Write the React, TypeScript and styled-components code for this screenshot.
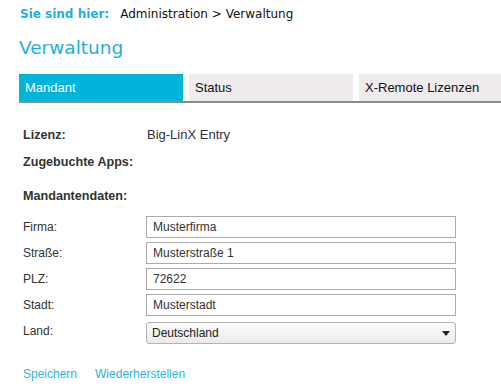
import React from 'react'
import styled, { createGlobalStyle } from 'styled-components'

const GlobalStyle = createGlobalStyle`
    html, body {
        margin: 0;
        padding: 0;
        background: #fff;
    }
    body {
        font-family: "Liberation Sans", Arial, sans-serif;
        color: #333;
    }
`

const Page = styled.div`
    width: 501px;
    height: 392px;
    overflow: hidden;
`

const Breadcrumb = styled.div`
    display: flex;
    align-items: baseline;
    padding: 6px 0 0 20px;
    height: 22px;
    font-family: "DejaVu Sans", Verdana, sans-serif;
    font-size: 12px;
    line-height: 16px;
    color: #111;
`
const Here = styled.strong`
    color: #1cb1dd;
    margin-right: 11px;
`

const Title = styled.h1`
    margin: 8px 0 0 19px;
    font-family: "DejaVu Sans", Verdana, sans-serif;
    font-weight: normal;
    font-size: 18.5px;
    line-height: 24px;
    color: #1cb1dd;
`

const Tabs = styled.div`
    display: flex;
    gap: 6px;
    margin: 14px 0 0 19px;
    border-bottom: 2px solid #8c8c8c;
`
const Tab = styled.div<{ $active?: boolean; $width: number }>`
    width: ${p => p.$width}px;
    height: 27px;
    box-sizing: border-box;
    padding: 0 6px;
    display: flex;
    align-items: center;
    font-size: 13px;
    background: ${p => (p.$active ? '#00b4dc' : '#efebee')};
    color: ${p => (p.$active ? '#fff' : '#111')};
`

const Info = styled.div`
    display: grid;
    grid-template-columns: 124px 1fr;
    row-gap: 9px;
    margin: 23px 0 0 23px;
    font-size: 13px;
    line-height: 18px;
`
const Key = styled.div`
    font-weight: bold;
    font-size: 12.6px;
`
const SectionTitle = styled.div`
    font-weight: bold;
    font-size: 12.6px;
    line-height: 18px;
    margin: 16px 0 0 23px;
`

const Form = styled.div`
    display: grid;
    grid-template-columns: 123px 310px;
    row-gap: 4px;
    margin: 11px 0 0 23px;
    font-size: 12px;
`
const Label = styled.label<{ $down?: number }>`
    display: flex;
    align-items: center;
    height: 22px;
    color: #333;
    margin-top: ${p => p.$down ?? 0}px;
`
const Input = styled.input`
    box-sizing: border-box;
    width: 310px;
    height: 22px;
    margin: 0;
    padding: 0 6px;
    border: 1px solid #ababab;
    font-family: "Liberation Sans", Arial, sans-serif;
    font-size: 12px;
    color: #333;
    background: #fff;
    outline: none;
`
const SelectWrap = styled.div`
    position: relative;
    width: 310px;
    height: 22px;
    margin-top: 2px;
    &::after {
        content: '';
        position: absolute;
        right: 6px;
        top: 9px;
        border-left: 4px solid transparent;
        border-right: 4px solid transparent;
        border-top: 5px solid #222;
    }
`
const Select = styled.select`
    appearance: none;
    box-sizing: border-box;
    width: 100%;
    height: 22px;
    margin: 0;
    padding: 0 5px;
    border: 1px solid #b3b3b3;
    border-radius: 3px;
    background: linear-gradient(#fdfbfc, #ebe9ea);
    font-family: "Liberation Sans", Arial, sans-serif;
    font-size: 12px;
    color: #222;
    outline: none;
`

const Actions = styled.div`
    display: flex;
    gap: 18px;
    margin: 23px 0 0 23px;
    font-size: 12px;
    line-height: 14px;
`
const Link = styled.a`
    color: #2bb6e1;
    text-decoration: none;
    cursor: pointer;
`

const fields = [
    { label: 'Firma:', value: 'Musterfirma' },
    { label: 'Straße:', value: 'Musterstraße 1' },
    { label: 'PLZ:', value: '72622' },
    { label: 'Stadt:', value: 'Musterstadt' },
]

const App: React.FC = () => {
    return (
        <Page>
            <GlobalStyle />
            <Breadcrumb>
                <Here>Sie sind hier:</Here>
                <span>Administration &gt; Verwaltung</span>
            </Breadcrumb>
            <Title>Verwaltung</Title>
            <Tabs>
                <Tab $active $width={164}>Mandant</Tab>
                <Tab $width={164}>Status</Tab>
                <Tab $width={142}>X-Remote Lizenzen</Tab>
            </Tabs>
            <Info>
                <Key>Lizenz:</Key>
                <div>Big-LinX Entry</div>
                <Key>Zugebuchte Apps:</Key>
                <div></div>
            </Info>
            <SectionTitle>Mandantendaten:</SectionTitle>
            <Form>
                {fields.map(f => (
                    <React.Fragment key={f.label}>
                        <Label>{f.label}</Label>
                        <Input defaultValue={f.value} readOnly />
                    </React.Fragment>
                ))}
                <Label>Land:</Label>
                <SelectWrap>
                    <Select defaultValue="de">
                        <option value="de">Deutschland</option>
                    </Select>
                </SelectWrap>
            </Form>
            <Actions>
                <Link>Speichern</Link>
                <Link>Wiederherstellen</Link>
            </Actions>
        </Page>
    )
}

export default App
